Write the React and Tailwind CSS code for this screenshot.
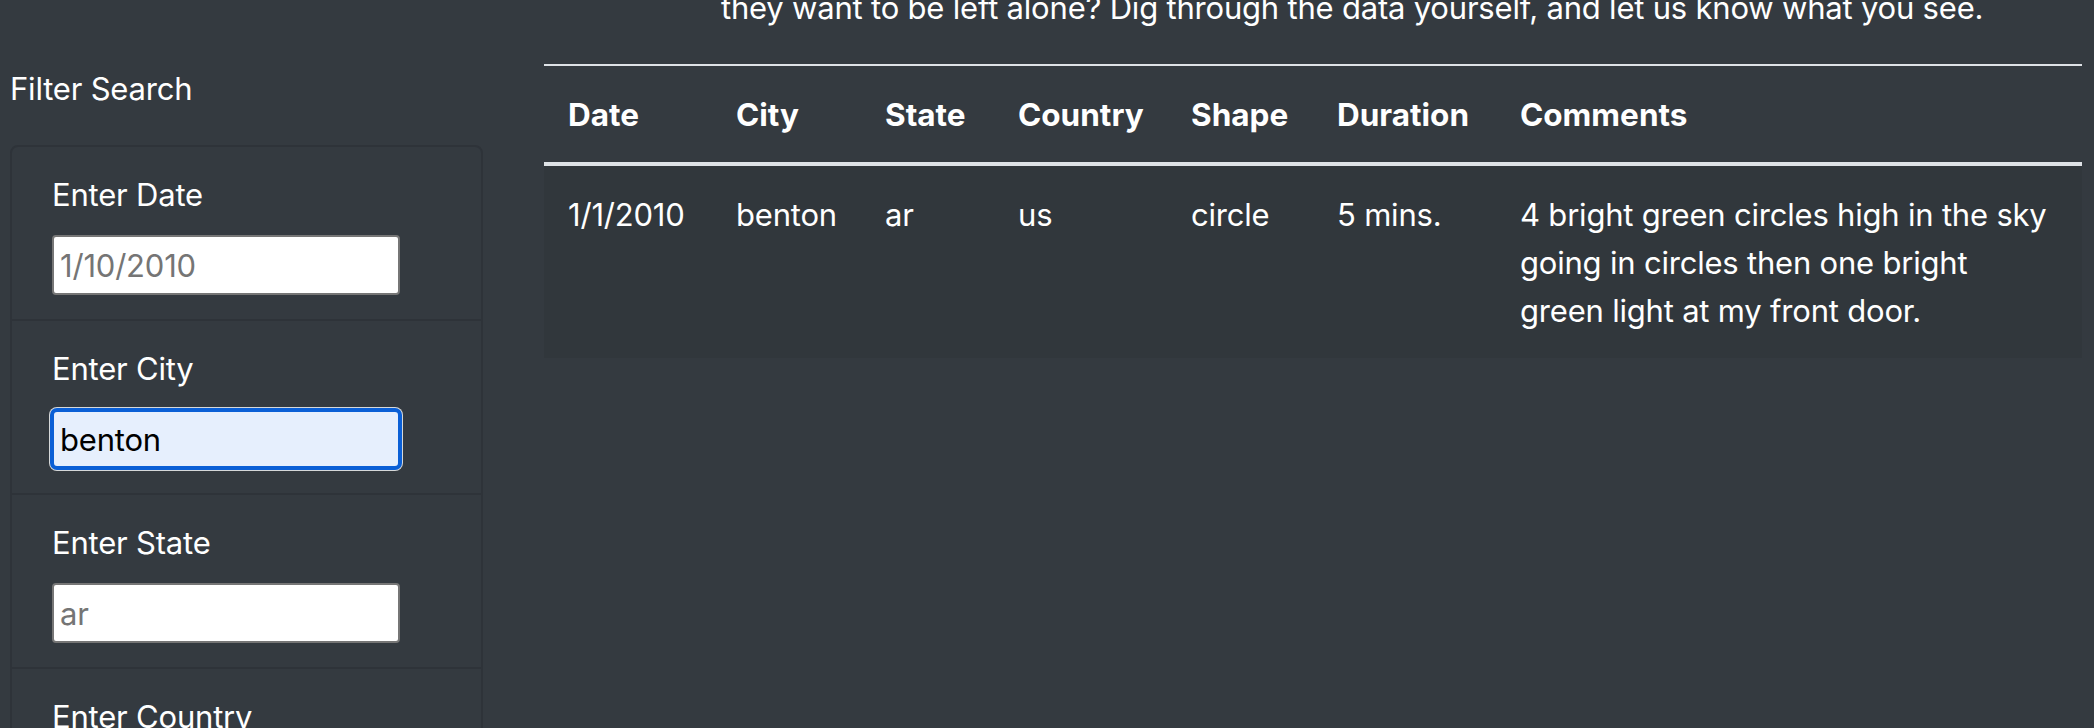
const FILTERS = [
  { id: "datetime", label: "Enter Date", placeholder: "1/10/2010" },
  { id: "city", label: "Enter City", placeholder: "roswell", value: "benton", focused: true },
  { id: "state", label: "Enter State", placeholder: "ar" },
  { id: "country", label: "Enter Country", placeholder: "us" },
  { id: "shape", label: "Enter Shape", placeholder: "circle" },
];

const COLUMNS = [
  { key: "datetime", title: "Date", width: "w-[168px]" },
  { key: "city", title: "City", width: "w-[149px]" },
  { key: "state", title: "State", width: "w-[133px]" },
  { key: "country", title: "Country", width: "w-[173px]" },
  { key: "shape", title: "Shape", width: "w-[146px]" },
  { key: "duration", title: "Duration", width: "w-[183px]" },
  { key: "comments", title: "Comments", width: "w-[586px]" },
];

const SIGHTINGS = [
  {
    datetime: "1/1/2010",
    city: "benton",
    state: "ar",
    country: "us",
    shape: "circle",
    duration: "5 mins.",
    comments:
      "4 bright green circles high in the sky going in circles then one bright green light at my front door.",
  },
];

function FilterItem({ filter }) {
  const base =
    "block px-[6px] text-[31px] text-black placeholder:text-[#757575] outline-none";
  return (
    <li className="px-[40px] py-[24px]">
      <label htmlFor={filter.id} className="block mb-[16px] leading-[48px]">
        {filter.label}
      </label>
      {filter.focused ? (
        <input
          id={filter.id}
          type="text"
          defaultValue={filter.value}
          placeholder={filter.placeholder}
          className={`${base} w-[352px] h-[62px] -ml-[2px] -mt-[1px] -mb-[1px] bg-[#e6effd] border-[4px] border-[#0a5fd6] rounded-[7px] ring-1 ring-white/80`}
        />
      ) : (
        <input
          id={filter.id}
          type="text"
          placeholder={filter.placeholder}
          className={`${base} w-[348px] h-[60px] bg-white border-2 border-[#767676] rounded-[4px]`}
        />
      )}
    </li>
  );
}

export default function App() {
  return (
    <div
      className="min-h-screen bg-[#343a40] text-white text-[31px] tracking-[-0.2px] overflow-hidden"
      style={{ fontFamily: "Inter, 'Noto Sans', 'Liberation Sans', sans-serif" }}
    >
      <div className="flex items-start">
        {/* filters */}
        <aside className="ml-[10px] w-[473px] pt-[65px] shrink-0">
          <h5 className="leading-[48px]">Filter Search</h5>
          <ul className="mt-[32px] border-2 border-[#2e3339] rounded-[8px] divide-y-2 divide-[#2e3339]">
            {FILTERS.map((f) => (
              <FilterItem key={f.id} filter={f} />
            ))}
          </ul>
        </aside>

        {/* results */}
        <main className="ml-[61px] w-[1538px] shrink-0 -mt-[16px]">
          <p className="leading-[48px] mb-[32px] pl-[177px] whitespace-nowrap">
            they want to be left alone? Dig through the data yourself, and let us know what you see.
          </p>
          <table className="w-full table-fixed border-collapse border-t-2 border-[#dee2e6]">
            <thead>
              <tr className="border-b-4 border-[#dee2e6]">
                {COLUMNS.map((c) => (
                  <th
                    key={c.key}
                    className={`${c.width} px-[24px] pt-[25px] pb-[23px] text-left text-[31.5px] tracking-normal font-bold leading-[48px] align-bottom`}
                  >
                    {c.title}
                  </th>
                ))}
              </tr>
            </thead>
            <tbody>
              {SIGHTINGS.map((s, i) => (
                <tr key={i} className="bg-black/5">
                  {COLUMNS.map((c) => (
                    <td key={c.key} className="px-[24px] pt-[25px] pb-[23px] align-top leading-[48px]">
                      {s[c.key]}
                    </td>
                  ))}
                </tr>
              ))}
            </tbody>
          </table>
        </main>
      </div>
    </div>
  );
}
